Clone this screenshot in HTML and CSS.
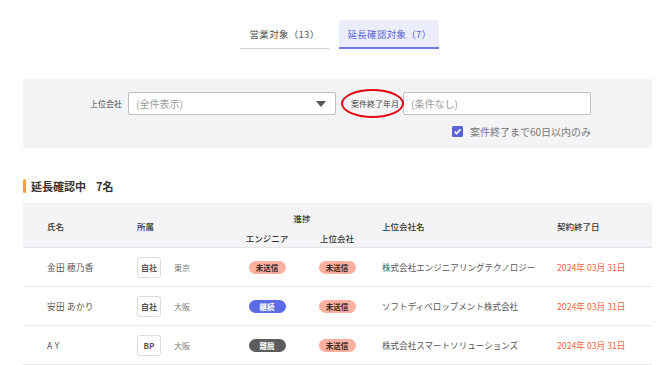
FILE: index.html
```html
<!DOCTYPE html>
<html lang="ja">
<head>
<meta charset="utf-8">
<link rel="stylesheet" href="styles.css">
</head>
<body>
<div class="page">
  <div class="tabs">
    <div class="tab">営業対象（13）</div>
    <div class="tab active">延長確認対象（7）</div>
  </div>

  <div class="filter">
    <div class="filter-row">
      <label class="flabel first">上位会社</label>
      <div class="select">
        <span class="ph">(全件表示)</span>
        <svg class="caret" width="10" height="6" viewBox="0 0 10 6"><path d="M0 0H10L5 6Z" fill="#555"/></svg>
      </div>
      <label class="flabel circled">案件終了年月</label>
      <div class="input"><span class="ph">(条件なし)</span></div>
    </div>
    <div class="check-row">
      <span class="checkbox">
        <svg width="11" height="11" viewBox="0 0 11 11"><rect width="11" height="11" rx="1.5" fill="#5b63d8"/><path d="M2.6 5.6L4.6 7.6L8.5 3.4" stroke="#fff" stroke-width="1.6" fill="none"/></svg>
      </span>
      <span class="check-text">案件終了まで60日以内のみ</span>
    </div>
  </div>

  <h2 class="section-title"><span class="bar"></span>延長確認中<span class="count">7名</span></h2>

  <div class="table">
    <div class="thead">
      <div class="th c-name">氏名</div>
      <div class="th c-aff">所属</div>
      <div class="th c-prog">
        <div class="prog-top">進捗</div>
        <div class="prog-sub"><span>エンジニア</span><span>上位会社</span></div>
      </div>
      <div class="th c-comp">上位会社名</div>
      <div class="th c-date">契約終了日</div>
    </div>
    <div class="tr">
      <div class="c-name name">金田 穂乃香</div>
      <div class="c-aff"><span class="aff-box">自社</span><span class="loc">東京</span></div>
      <div class="c-st"><span class="pill unsent">未送信</span></div>
      <div class="c-st"><span class="pill unsent">未送信</span></div>
      <div class="c-comp comp">株式会社エンジニアリングテクノロジー</div>
      <div class="c-date date">2024年 03月 31日</div>
    </div>
    <div class="tr">
      <div class="c-name name">安田 あかり</div>
      <div class="c-aff"><span class="aff-box">自社</span><span class="loc">大阪</span></div>
      <div class="c-st"><span class="pill cont">継続</span></div>
      <div class="c-st"><span class="pill unsent">未送信</span></div>
      <div class="c-comp comp">ソフトディベロップメント株式会社</div>
      <div class="c-date date">2024年 03月 31日</div>
    </div>
    <div class="tr">
      <div class="c-name name">A Y</div>
      <div class="c-aff"><span class="aff-box">BP</span><span class="loc">大阪</span></div>
      <div class="c-st"><span class="pill leave">離脱</span></div>
      <div class="c-st"><span class="pill unsent">未送信</span></div>
      <div class="c-comp comp">株式会社スマートソリューションズ</div>
      <div class="c-date date">2024年 03月 31日</div>
    </div>
  </div>
</div>
</body>
</html>
```

FILE: styles.css
```css
* { box-sizing: border-box; }
html, body { margin: 0; padding: 0; background: #fff; }
body {
  font-family: "Noto Sans CJK JP", "Noto Sans", sans-serif;
  color: #333;
  width: 670px;
  overflow: hidden;
}
.page { padding: 20px 18px 0 23px; }

.tabs {
  display: flex;
  justify-content: center;
  gap: 10px;
  padding-left: 4px;
}
.tab {
  height: 29px;
  line-height: 29px;
  font-size: 9.5px;
  color: #555;
  padding: 0 10px;
  border-bottom: 1.5px solid #d0d0d4;
  letter-spacing: 0.3px;
}
.tab.active {
  background: #ecedfb;
  color: #5b63d8;
  border-bottom: 2px solid #6f7be6;
  border-radius: 3px 3px 0 0;
  padding: 0 8px;
}

.filter {
  margin-top: 30px;
  background: #f4f4f6;
  height: 69px;
  padding-top: 13px;
  border-radius: 2px;
}
.filter-row {
  display: flex;
  align-items: center;
}
.flabel {
  font-size: 8px;
  color: #444;
}
.flabel.first {
  width: 99px;
  text-align: right;
  margin-right: 6px;
}
.select, .input {
  height: 23px;
  background: #fff;
  border: 1px solid #bfbfc4;
  border-radius: 2px;
  display: flex;
  align-items: center;
  padding-left: 7px;
}
.select { width: 208px; justify-content: space-between; padding-right: 9px; }
.input { width: 188px; }
.ph { font-size: 10px; color: #9a9a9a; }
.flabel.circled {
  position: relative;
  margin-left: 15px;
  margin-right: 4px;
}
.flabel.circled::after {
  content: "";
  position: absolute;
  left: -10px;
  right: -5px;
  top: -9px;
  bottom: -9px;
  border: 2px solid #e00a14;
  border-radius: 50%;
}
.check-row {
  display: flex;
  align-items: center;
  justify-content: flex-end;
  width: 568px;
  margin-top: 9px;
}
.checkbox { display: flex; margin-right: 7px; }
.check-text { font-size: 10px; color: #777; }

.section-title {
  margin: 31px 0 0 0;
  display: flex;
  align-items: center;
  font-size: 11px;
  font-weight: 700;
  color: #333;
  height: 14px;
}
.section-title .bar {
  width: 3px;
  height: 14px;
  background: #f5a03c;
  border-radius: 1.5px;
  margin-right: 5px;
}
.section-title .count { margin-left: 10px; }

.table { margin-top: 10px; }
.thead, .tr {
  display: grid;
  grid-template-columns: 114px 95px 70px 70px 185px 95px;
}
.thead {
  background: #f4f4f6;
  height: 45px;
  border-bottom: 1px solid #e4e4e8;
  align-items: center;
}
.th { font-size: 8.5px; color: #333; font-weight: 500; }
.c-name { padding-left: 24px; }
.c-comp { padding-left: 10px; }
.c-prog {
  grid-column: 3 / span 2;
  display: flex;
  flex-direction: column;
  align-items: stretch;
  height: 45px;
  padding-top: 5px;
}
.prog-top { text-align: center; height: 20px; line-height: 20px; }
.prog-sub { display: flex; height: 20px; line-height: 20px; }
.prog-sub span { flex: 1; text-align: center; }

.tr {
  height: 39px;
  align-items: center;
  border-bottom: 1.5px solid #eaeaec;
}
.name { font-size: 8.6px; color: #555; letter-spacing: 0.3px; }
.c-aff { display: flex; align-items: center; }
.aff-box {
  width: 24px;
  height: 21px;
  border: 1px solid #dcdce0;
  border-radius: 3px;
  background: #fff;
  font-size: 8px;
  font-weight: 700;
  color: #555;
  display: flex;
  align-items: center;
  justify-content: center;
}
.loc { font-size: 8px; color: #777; margin-left: 13px; }
.c-st { display: flex; justify-content: center; }
.pill {
  width: 37px;
  height: 13px;
  border-radius: 7px;
  font-size: 7.5px;
  font-weight: 700;
  display: flex;
  align-items: center;
  justify-content: center;
}
.pill.unsent { background: #fbb0a0; color: #3a2a26; }
.pill.cont { background: #5b6be8; color: #fff; }
.pill.leave { background: #5c5c5c; color: #fff; }
.comp { font-size: 8.55px; color: #555; white-space: nowrap; }
.date { font-size: 8.7px; color: #f3643f; white-space: nowrap; }
```
